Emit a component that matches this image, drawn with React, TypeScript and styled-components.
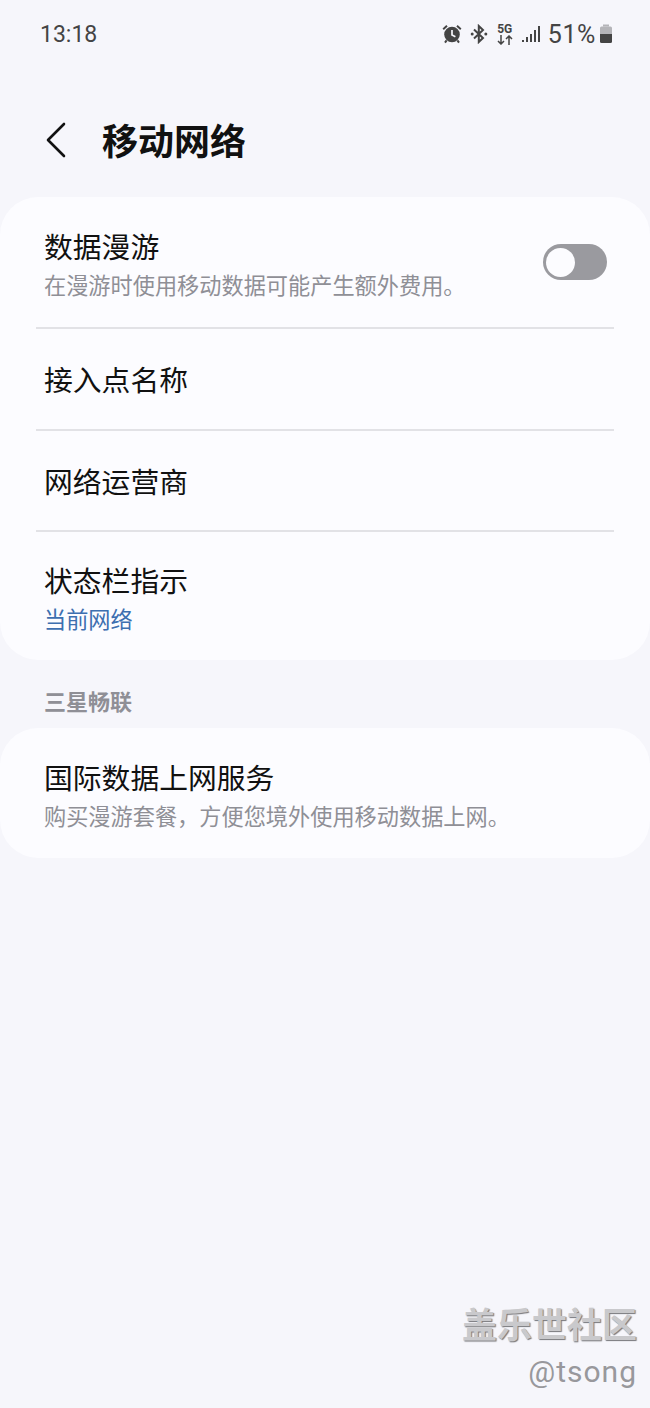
import React from "react";
import styled, { createGlobalStyle } from "styled-components";

const GlobalStyle = createGlobalStyle`
    html, body {
        margin: 0;
        padding: 0;
        background: #f6f6fb;
    }
    body {
        font-family: "Roboto", "Noto Sans CJK SC", sans-serif;
    }
`;

interface RowProps {
    title: string;
    sub?: string;
    accent?: boolean;
    height: number;
    toggle?: boolean;
}

const Row = ({ title, sub, accent, height, toggle }: RowProps) => {
    return (
        <RowWrap $height={height}>
            <RowText $hasSub={!!sub}>
                <RowTitle>{title}</RowTitle>
                {sub && <RowSub $accent={accent}>{sub}</RowSub>}
            </RowText>
            {toggle && (
                <Toggle>
                    <Knob />
                </Toggle>
            )}
        </RowWrap>
    );
};

const AlarmIcon = () => (
    <svg width="20" height="20" viewBox="0 0 20 20">
        <circle cx="10" cy="10.5" r="7.8" fill="#444" />
        <path d="M10 6v5l3.4 1.8" fill="none" stroke="#f6f6fb" strokeWidth="1.7" />
        <path d="M1.2 5.2 5 1.8M18.8 5.2 15 1.8M4.6 16.4 3 18.6M15.4 16.4 17 18.6" stroke="#444" strokeWidth="2" fill="none" />
    </svg>
);

const BluetoothIcon = () => (
    <svg width="18" height="20" viewBox="0 0 18 20">
        <path d="M4 5.6 13 14 8.8 18V2L13 6 4 14.4" fill="none" stroke="#444" strokeWidth="2" />
        <circle cx="2.2" cy="10" r="1.5" fill="#444" />
        <circle cx="15.8" cy="10" r="1.5" fill="#444" />
    </svg>
);

const ArrowsIcon = () => (
    <svg width="16" height="10" viewBox="0 0 16 10">
        <path d="M4 0v9M1 6l3 3 3-3M12 10V1M9 4l3-3 3 3" fill="none" stroke="#444" strokeWidth="1.5" />
    </svg>
);

const SignalIcon = () => (
    <svg width="18" height="18" viewBox="0 0 18 18">
        <rect x="0" y="15" width="2" height="2" fill="#444" />
        <rect x="4" y="12" width="2" height="5" fill="#444" />
        <rect x="8" y="9" width="2" height="8" fill="#444" />
        <rect x="12" y="5" width="2" height="12" fill="#444" />
        <rect x="16" y="1" width="2" height="16" fill="#444" />
    </svg>
);

const BatteryIcon = () => (
    <svg width="14" height="20" viewBox="0 0 14 20">
        <path d="M4 0.5h6v2H4z" fill="#b4b4b8" />
        <path d="M1 4a1.5 1.5 0 0 1 1.5-1.5h9A1.5 1.5 0 0 1 13 4v6H1z" fill="#b4b4b8" />
        <path d="M1 10h12v7.5a1.5 1.5 0 0 1-1.5 1.5h-9A1.5 1.5 0 0 1 1 17.5z" fill="#444" />
    </svg>
);

const BackIcon = () => (
    <svg width="22" height="36" viewBox="0 0 22 36">
        <path d="M19 2 3 18l16 16" fill="none" stroke="#111" strokeWidth="2.6" strokeLinecap="round" strokeLinejoin="round" />
    </svg>
);

const App = () => {
    return (
        <Page>
            <GlobalStyle />
            <StatusBar>
                <Time>13:18</Time>
                <StatusIcons>
                    <AlarmIcon />
                    <BluetoothIcon />
                    <FiveG>
                        <span>5G</span>
                        <ArrowsIcon />
                    </FiveG>
                    <SignalIcon />
                    <Battery>51%</Battery>
                    <BatteryIcon />
                </StatusIcons>
            </StatusBar>
            <Header>
                <BackIcon />
                <Title>移动网络</Title>
            </Header>
            <Card>
                <Row title="数据漫游" sub="在漫游时使用移动数据可能产生额外费用。" height={130} toggle />
                <Divider />
                <Row title="接入点名称" height={100} />
                <Divider />
                <Row title="网络运营商" height={99} />
                <Divider />
                <Row title="状态栏指示" sub="当前网络" accent height={128} />
            </Card>
            <SectionLabel>三星畅联</SectionLabel>
            <Card>
                <Row title="国际数据上网服务" sub="购买漫游套餐，方便您境外使用移动数据上网。" height={130} />
            </Card>
            <Watermark>
                <WatermarkName>盖乐世社区</WatermarkName>
                <WatermarkUser>@tsong</WatermarkUser>
            </Watermark>
        </Page>
    );
};

const Page = styled.div`
    position: relative;
    width: 650px;
    height: 1408px;
    overflow: hidden;
    background: #f6f6fb;
    font-family: "Roboto", "Noto Sans CJK SC", sans-serif;
`;

const StatusBar = styled.div`
    height: 68px;
    padding: 0 37px 0 40px;
    display: flex;
    align-items: center;
    justify-content: space-between;
    color: #444;
`;

const Time = styled.div`
    font-size: 23px;
`;

const StatusIcons = styled.div`
    display: flex;
    align-items: center;
    gap: 8px;
`;

const FiveG = styled.div`
    display: flex;
    flex-direction: column;
    align-items: center;
    width: 16px;
    margin: 0 1px;
    font-size: 12px;
    font-weight: 700;
    line-height: 11px;
`;

const Battery = styled.div`
    font-size: 25px;
    letter-spacing: 0.6px;
    margin-right: -5px;
`;

const Header = styled.div`
    height: 129px;
    box-sizing: border-box;
    padding: 15px 0 0 45px;
    display: flex;
    align-items: center;
    gap: 35px;
`;

const Title = styled.div`
    font-family: "Noto Sans CJK SC", sans-serif;
    font-size: 36px;
    font-weight: 700;
    color: #111;
    line-height: 1;
    margin-top: -2px;
`;

const Card = styled.div`
    background: #fcfcff;
    border-radius: 38px;
    display: flex;
    flex-direction: column;
`;

const RowWrap = styled.div<{ $height: number }>`
    height: ${(p) => p.$height}px;
    padding: 0 43px 0 44px;
    display: flex;
    align-items: center;
    justify-content: space-between;
`;

const RowText = styled.div<{ $hasSub: boolean }>`
    display: flex;
    flex-direction: column;
    gap: 7px;
    margin-top: ${(p) => (p.$hasSub ? 2 : 0)}px;
`;

const RowTitle = styled.div`
    font-family: "Noto Sans CJK SC", sans-serif;
    font-size: 28.8px;
    line-height: 34px;
    color: #111;
`;

const RowSub = styled.div<{ $accent?: boolean }>`
    font-family: "Noto Sans CJK SC", sans-serif;
    font-size: 22.2px;
    line-height: 28px;
    color: ${(p) => (p.$accent ? "#3d6fb0" : "#8f8f96")};
`;

const Divider = styled.div`
    height: 2px;
    margin: 0 36px;
    background: #e2e2e6;
`;

const Toggle = styled.div`
    width: 64px;
    height: 36px;
    border-radius: 18px;
    background: #9a9a9f;
    box-sizing: border-box;
    padding: 3px;
    display: flex;
    align-items: center;
`;

const Knob = styled.div`
    width: 29px;
    height: 29px;
    border-radius: 50%;
    background: #fcfcff;
`;

const SectionLabel = styled.div`
    height: 68px;
    padding: 12px 0 0 44px;
    box-sizing: border-box;
    display: flex;
    align-items: center;
    font-family: "Noto Sans CJK SC", sans-serif;
    font-size: 22px;
    font-weight: 700;
    color: #8f8f96;
`;

const Watermark = styled.div`
    position: absolute;
    right: 13px;
    top: 1298px;
    display: flex;
    flex-direction: column;
    align-items: flex-end;
`;

const WatermarkName = styled.div`
    font-family: "Noto Sans CJK SC", sans-serif;
    font-size: 35px;
    font-weight: 700;
    line-height: 50px;
    color: #c9c9cc;
    text-shadow: 1px 1px 1px #77777b;
`;

const WatermarkUser = styled.div`
    font-size: 30px;
    line-height: 38px;
    margin-top: 5px;
    letter-spacing: 1px;
    color: #98989c;
`;

export default App;
